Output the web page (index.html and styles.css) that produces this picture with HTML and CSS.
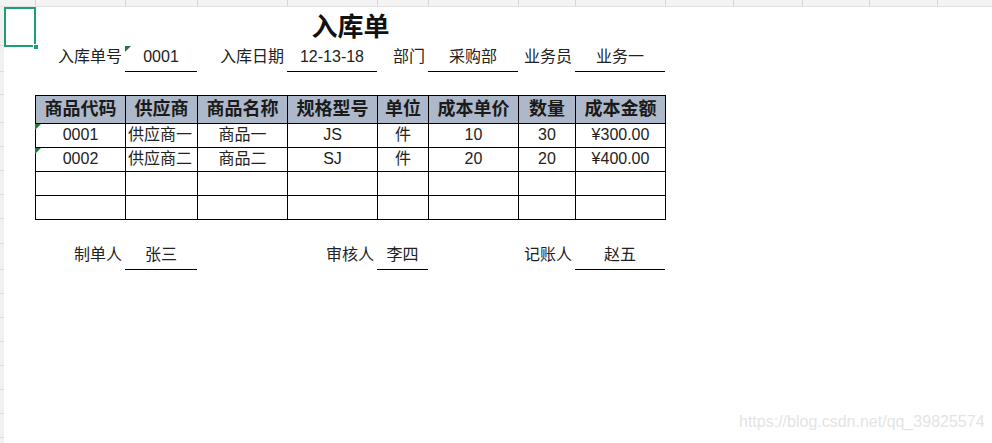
FILE: index.html
```html
<!DOCTYPE html>
<html lang="zh-CN">
<head>
<meta charset="utf-8">
<title>入库单</title>
<link rel="stylesheet" href="styles.css">
</head>
<body>
<div class="app">
  <div class="colbar">
    <span class="ch w36"></span><span class="ch w90"></span><span class="ch w72"></span><span class="ch w90"></span><span class="ch w90"></span><span class="ch w51"></span><span class="ch w90"></span><span class="ch w57"></span><span class="ch w90"></span><span class="ch w68"></span><span class="ch w69"></span><span class="ch w67"></span><span class="ch w68"></span><span class="ch rest"></span>
  </div>
  <div class="main">
    <div class="rowbar">
      <div class="rh h39"></div><div class="rh h26"></div><div class="rh h23"></div><div class="rh h28"></div><div class="rh h24"></div><div class="rh h24"></div><div class="rh h24"></div><div class="rh h24"></div><div class="rh h25"></div><div class="rh h26"></div><div class="rh h24"></div><div class="rh h24"></div><div class="rh h24"></div><div class="rh h24"></div><div class="rh h24"></div><div class="rh h24"></div><div class="rh h24"></div><div class="rh h24"></div>
    </div>
    <div class="sheet">
      <div class="selection"><span class="handle"></span></div>

      <div class="title-row"><h1 class="title">入库单</h1></div>

      <div class="form-row info-row">
        <div class="lbl">入库单号</div>
        <div class="val mark">0001</div>
        <div class="lbl">入库日期</div>
        <div class="val">12-13-18</div>
        <div class="lbl">部门</div>
        <div class="val">采购部</div>
        <div class="lbl">业务员</div>
        <div class="val">业务一</div>
      </div>

      <div class="gap-a"></div>

      <div class="grid">
        <div class="th">商品代码</div>
        <div class="th">供应商</div>
        <div class="th">商品名称</div>
        <div class="th">规格型号</div>
        <div class="th">单位</div>
        <div class="th">成本单价</div>
        <div class="th">数量</div>
        <div class="th">成本金额</div>

        <div class="td mark">0001</div>
        <div class="td left">供应商一</div>
        <div class="td">商品一</div>
        <div class="td">JS</div>
        <div class="td">件</div>
        <div class="td">10</div>
        <div class="td">30</div>
        <div class="td">¥300.00</div>

        <div class="td mark">0002</div>
        <div class="td left">供应商二</div>
        <div class="td">商品二</div>
        <div class="td">SJ</div>
        <div class="td">件</div>
        <div class="td">20</div>
        <div class="td">20</div>
        <div class="td">¥400.00</div>

        <div class="td"></div><div class="td"></div><div class="td"></div><div class="td"></div><div class="td"></div><div class="td"></div><div class="td"></div><div class="td"></div>
        <div class="td"></div><div class="td"></div><div class="td"></div><div class="td"></div><div class="td"></div><div class="td"></div><div class="td"></div><div class="td"></div>
      </div>

      <div class="gap-b"></div>

      <div class="form-row sig-row">
        <div class="lbl">制单人</div>
        <div class="val">张三</div>
        <div class="empty"></div>
        <div class="lbl">审核人</div>
        <div class="val">李四</div>
        <div class="empty"></div>
        <div class="lbl">记账人</div>
        <div class="val">赵五</div>
      </div>
    </div>
  </div>
  <div class="watermark">https://blog.csdn.net/qq_39825574</div>
</div>
</body>
</html>
```

FILE: styles.css
```css
* { box-sizing: border-box; }
html, body { margin: 0; padding: 0; background: #fff; }
body {
  width: 992px;
  height: 443px;
  overflow: hidden;
  font-family: "Liberation Sans", "Noto Sans CJK SC", sans-serif;
  font-size: 16px;
  color: #222;
}
.app { position: relative; width: 992px; height: 443px; }

/* column header strip */
.colbar {
  display: flex;
  height: 7px;
  background: #f3f3f3;
  border-bottom: 1px solid #e2e2e2;
}
.ch { height: 100%; border-right: 1px solid #d6d6d6; flex: none; }
.w36 { width: 36px; }
.w90 { width: 90px; }
.w72 { width: 72px; }
.w51 { width: 51px; }
.w57 { width: 57px; }
.w68 { width: 68px; }
.w69 { width: 69px; }
.w67 { width: 67px; }
.rest { flex: 1; border-right: 0; }

.main { display: flex; }

/* row header strip */
.rowbar {
  width: 4px;
  flex: none;
  background: #f1f1f1;
  display: flex;
  flex-direction: column;
}
.rh { border-bottom: 1px solid #dcdcdc; flex: none; }
.h39 { height: 39px; }
.h26 { height: 26px; }
.h23 { height: 23px; }
.h28 { height: 28px; }
.h24 { height: 24px; }
.h25 { height: 25px; }

.sheet {
  position: relative;
  flex: 1;
  display: flex;
  flex-direction: column;
}

.selection {
  position: absolute;
  left: 0;
  top: 0;
  width: 32px;
  height: 40px;
  border: 2px solid #1f9e6e;
}
.handle {
  position: absolute;
  right: -5px;
  bottom: -5px;
  width: 6px;
  height: 6px;
  background: #1f9e6e;
  border: 1px solid #fff;
}

.title-row {
  height: 39px;
  margin-left: 31px;
  width: 631px;
  display: flex;
  align-items: center;
  justify-content: center;
}
.title {
  margin: 0;
  font-size: 26px;
  font-weight: bold;
  color: #111;
  line-height: 30px;
  padding-top: 0;
}

.form-row {
  display: grid;
  grid-template-columns: 90px 72px 90px 90px 51px 90px 57px 90px;
  margin-left: 31px;
  height: 26px;
}
.lbl, .val, .empty {
  height: 26px;
  line-height: 22px;
  white-space: nowrap;
}
.lbl { text-align: right; padding-right: 3px; }
.val {
  position: relative;
  text-align: center;
  border-bottom: 1px solid #000;
}

.gap-a { height: 23px; }
.gap-b { height: 24px; }

.grid {
  display: grid;
  grid-template-columns: 90px 72px 90px 90px 51px 90px 57px 90px;
  grid-auto-rows: 24px;
  grid-template-rows: 28px;
  margin-left: 31px;
  width: 631px;
  border-left: 1px solid #000;
  border-top: 1px solid #000;
}
.th, .td {
  border-right: 1px solid #000;
  border-bottom: 1px solid #000;
  text-align: center;
  white-space: nowrap;
  overflow: visible;
  position: relative;
}
.th {
  background: #adb9ca;
  font-size: 18px;
  font-weight: bold;
  color: #1a1a1a;
  line-height: 26px;
}
.td { line-height: 22px; }
.td.left { text-align: left; padding-left: 2px; }

.mark::before {
  content: "";
  position: absolute;
  left: 0;
  top: 0;
  width: 0;
  height: 0;
  border-top: 6px solid #1d7a3c;
  border-right: 6px solid transparent;
}
.td.mark::before { left: -1px; }

.watermark {
  position: absolute;
  left: 739px;
  top: 413px;
  font-family: "Liberation Sans", sans-serif;
  font-size: 16px;
  color: #e4e4e4;
  white-space: nowrap;
}
```
